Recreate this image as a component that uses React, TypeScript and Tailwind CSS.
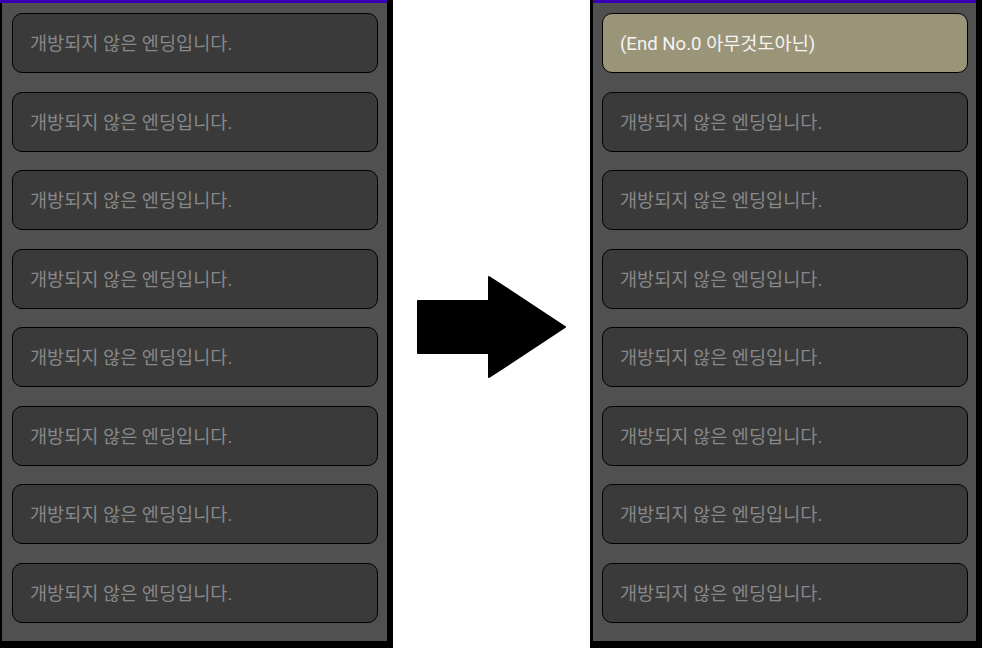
import * as React from 'react';

const LOCKED = '개방되지 않은 엔딩입니다.';

function EndingCard({ text, open }: { text: string; open?: boolean }) {
  return (
    <div
      className={
        open
          ? 'h-[60px] shrink-0 flex items-center pl-[17px] pt-[4px] rounded-[10px] border border-black bg-[#9a9579] text-[#f4f4f0] text-[18.6px]'
          : 'h-[60px] shrink-0 flex items-center pl-[17px] pt-[4px] rounded-[10px] border border-black bg-[#3a3a3a] text-[#888888] text-[18.6px]'
      }
    >
      {text}
    </div>
  );
}

function Phone({ first, left }: { first?: string; left?: boolean }) {
  const cards = [first ?? LOCKED, LOCKED, LOCKED, LOCKED, LOCKED, LOCKED, LOCKED, LOCKED];
  return (
    <div className={left ? 'w-[393px] h-full bg-black flex flex-col pb-[7px]' : 'w-[392px] h-full bg-black flex flex-col pb-[7px] pl-[3px]'}>
      {/* status bar */}
      <div className="h-[3px] shrink-0 mr-[6px] bg-[#3700b3]" />
      <div className={left ? 'flex-1 ml-[2px] mr-[6px] bg-[#505050] overflow-hidden' : 'flex-1 mr-[6px] bg-[#505050] overflow-hidden'}>
        <div className={left ? 'flex flex-col gap-[18.5px] pt-[10px] pl-[10px] pr-[9px]' : 'flex flex-col gap-[18.5px] pt-[10px] pl-[9px] pr-[8px]'}>
          {cards.map((t, i) => (
            <EndingCard key={i} text={t} open={i === 0 && !!first} />
          ))}
        </div>
      </div>
    </div>
  );
}

export default function App() {
  return (
    <div
      className="w-[982px] h-[648px] bg-white flex overflow-hidden"
      style={{ fontFamily: "Roboto, 'Noto Sans CJK KR', sans-serif" }}
    >
      <Phone left />
      <div className="flex-1 flex items-center justify-center pt-[6px]">
        <svg width="150" height="102" viewBox="0 0 150 102">
          <path
            d="M1 25 H72 V1 L148 51 L72 101 V77 H1 Z"
            fill="black"
            stroke="black"
            strokeWidth="2"
            strokeLinejoin="round"
          />
        </svg>
      </div>
      <Phone first="(End No.0 아무것도아닌)" />
    </div>
  );
}
